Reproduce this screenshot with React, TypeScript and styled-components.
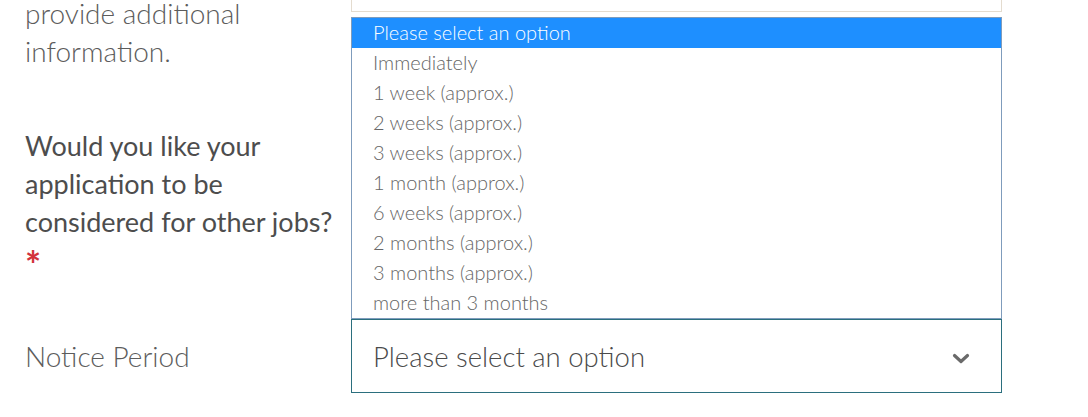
import styled, { createGlobalStyle } from "styled-components";

const options = [
  "Please select an option",
  "Immediately",
  "1 week (approx.)",
  "2 weeks (approx.)",
  "3 weeks (approx.)",
  "1 month (approx.)",
  "6 weeks (approx.)",
  "2 months (approx.)",
  "3 months (approx.)",
  "more than 3 months",
];

const App = () => {
  return (
    <>
      <GlobalStyle />
      <Form>
        <Row>
          <Label $light $top={54}>
            provide additional
            <br />
            information.
          </Label>
          <TextArea />
        </Row>

        <Row $space={57}>
          <Label>
            Would you like your
            <br />
            application to be
            <br />
            considered for other jobs?
            <br />
            <Required>*</Required>
          </Label>
          <SelectBox />
        </Row>

        <Row $space={35} $center>
          <Label $light>Notice Period</Label>
          <SelectWrap>
            <OptionList>
              {options.map((opt, i) => (
                <OptionItem key={opt} $active={i === 0}>
                  {opt}
                </OptionItem>
              ))}
            </OptionList>
            <SelectBox>
              <SelectText>Please select an option</SelectText>
              <Chevron width="18" height="12" viewBox="0 0 18 12">
                <polyline points="2.5,2.5 9,8.5 15.5,2.5" />
              </Chevron>
            </SelectBox>
          </SelectWrap>
        </Row>
      </Form>
    </>
  );
};

export default App;

const GlobalStyle = createGlobalStyle`
  html, body {
    margin: 0;
    background: #ffffff;
    overflow: hidden;
  }
  body {
    font-family: Lato, "Open Sans", sans-serif;
  }
`;

const Form = styled.div`
  margin-top: -60px;
  width: 1002px;
  display: flex;
  flex-direction: column;
`;

const Row = styled.div<{ $space?: number; $center?: boolean }>`
  display: grid;
  grid-template-columns: 351px 651px;
  align-items: ${(p) => (p.$center ? "center" : "start")};
  margin-top: ${(p) => p.$space ?? 0}px;
`;

const Label = styled.div<{ $light?: boolean; $top?: number }>`
  padding-left: 25px;
  padding-top: ${(p) => p.$top ?? 0}px;
  font-size: ${(p) => (p.$light ? 28 : 27)}px;
  line-height: 38px;
  font-weight: ${(p) => (p.$light ? 300 : 400)};
  color: ${(p) => (p.$light ? "#5c5c5c" : "#4d4d4d")};
`;

const Required = styled.span`
  display: inline-block;
  color: #d2323c;
  font-weight: 700;
  font-size: 38px;
  line-height: 38px;
  transform: translateY(4px);
`;

const TextArea = styled.div`
  height: 72px;
  box-sizing: border-box;
  border: 1px solid #e4dccf;
  background: #ffffff;
`;

const SelectWrap = styled.div`
  position: relative;
`;

const SelectBox = styled.div`
  height: 74px;
  box-sizing: border-box;
  border: 1px solid #2b6f7e;
  background: #ffffff;
  display: flex;
  align-items: center;
  justify-content: space-between;
  padding: 0 31px 0 21px;
`;

const SelectText = styled.span`
  font-size: 27.5px;
  font-weight: 300;
  color: #4a4a4a;
`;

const Chevron = styled.svg`
  margin-top: 6px;
  fill: none;
  stroke: #6a6a6a;
  stroke-width: 3.2;
  stroke-linecap: round;
  stroke-linejoin: round;
`;

const OptionList = styled.ul`
  position: absolute;
  left: 0;
  right: 0;
  bottom: 100%;
  margin: 0;
  padding: 0;
  list-style: none;
  background: #ffffff;
  border: 1px solid #7f9cbc;
  z-index: 2;
`;

const OptionItem = styled.li<{ $active?: boolean }>`
  height: 30px;
  display: flex;
  align-items: center;
  padding-left: 21px;
  padding-bottom: 2px;
  box-sizing: border-box;
  font-size: 20px;
  font-weight: 300;
  color: ${(p) => (p.$active ? "#ffffff" : "#666666")};
  background: ${(p) => (p.$active ? "#1e8fff" : "transparent")};
`;
